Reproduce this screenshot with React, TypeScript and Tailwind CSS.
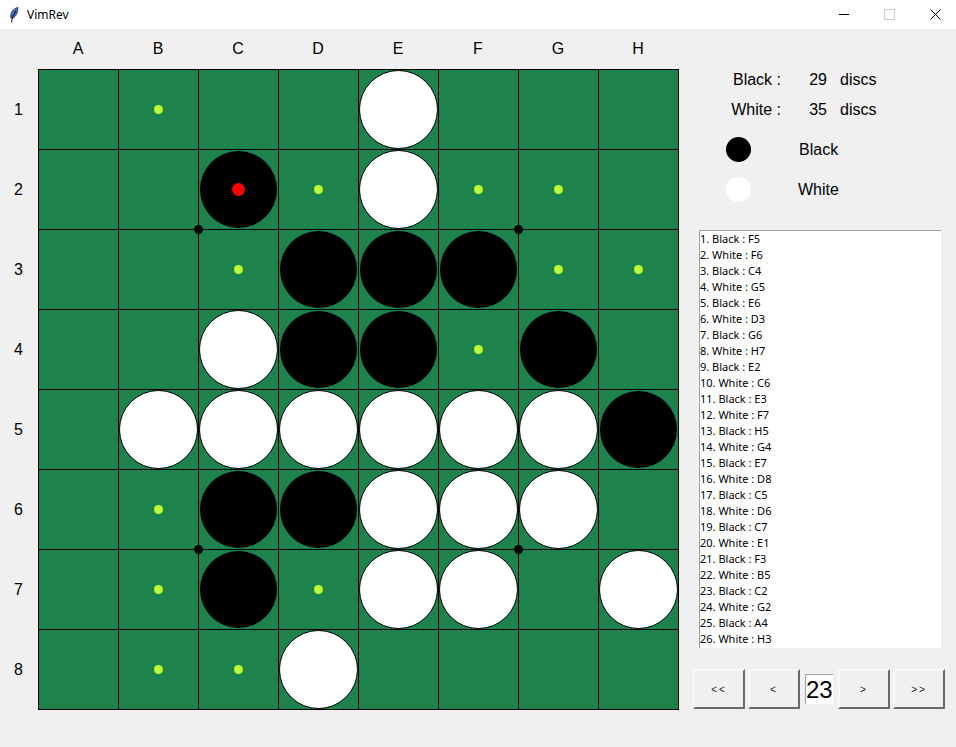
type Mark = "b" | "w" | "h" | "l" | ".";

const COLS = ["A", "B", "C", "D", "E", "F", "G", "H"];

// b = black disc, w = white disc, h = legal move hint, l = last move
const BOARD: string[] = [
  ".h..w...",
  "..lhwhh.",
  "..hbbbhh",
  "..wbbhb.",
  ".wwwwwwb",
  ".hbbwww.",
  ".hbhww.w",
  ".hhw....",
];

const MOVES = [
  "1. Black : F5", "2. White : F6", "3. Black : C4", "4. White : G5", "5. Black : E6",
  "6. White : D3", "7. Black : G6", "8. White : H7", "9. Black : E2", "10. White : C6",
  "11. Black : E3", "12. White : F7", "13. Black : H5", "14. White : G4", "15. Black : E7",
  "16. White : D8", "17. Black : C5", "18. White : D6", "19. Black : C7", "20. White : E1",
  "21. Black : F3", "22. White : B5", "23. Black : C2", "24. White : G2", "25. Black : A4",
  "26. White : H3",
];

function Cell({ mark }: { mark: Mark }) {
  return (
    <div className="w-[80px] h-[80px] flex items-center justify-center border-r border-b border-black">
      {mark === "b" && <div className="w-[77px] h-[77px] rounded-full bg-black" />}
      {mark === "w" && <div className="w-[79px] h-[79px] rounded-full bg-white border border-black" />}
      {mark === "h" && <div className="w-[9px] h-[9px] rounded-full bg-[#c0ff33]" />}
      {mark === "l" && (
        <div className="w-[77px] h-[77px] rounded-full bg-black flex items-center justify-center">
          <div className="w-[13px] h-[13px] rounded-full bg-[#ff0000]" />
        </div>
      )}
    </div>
  );
}

function NavButton({ label }: { label: string }) {
  return (
    <button className="w-[52px] h-[40px] flex items-center justify-center bg-[#f0f0f0] border-2 border-t-[#f8f8f8] border-l-[#f8f8f8] border-r-[#696969] border-b-[#696969] text-[10px] tracking-[2px] text-[#222]">
      {label}
    </button>
  );
}

export default function App() {
  return (
    <div className="w-[956px] h-[747px] flex flex-col bg-[#f0f0f0] overflow-hidden font-['Liberation_Sans',sans-serif] text-black">
      <div className="h-[29px] shrink-0 bg-white flex items-center">
        <svg className="ml-[10px] shrink-0" width="9" height="16" viewBox="0 0 9 16">
          <path d="M8 0.5 C4.5 1 1.2 4 0.8 8 L0.8 11 L3 11 C6 9.5 8 5 8 0.5 Z" fill="#3f74c4" stroke="#1f2f4a" strokeWidth="0.8" />
          <path d="M6 3.5 L2.2 11 L1.6 15.5" fill="none" stroke="#111" strokeWidth="1" />
        </svg>
        <span className="ml-[8px] text-[12px] font-['Noto_Sans',sans-serif]">VimRev</span>
        <div className="ml-auto flex items-center">
          <div className="w-[42px] h-[29px] flex items-center justify-center">
            <div className="w-[10px] h-px bg-black" />
          </div>
          <div className="w-[49px] h-[29px] flex items-center justify-center">
            <div className="w-[11px] h-[11px] border border-[#cccccc]" />
          </div>
          <div className="w-[42px] h-[29px] flex items-center justify-center">
            <svg width="11" height="11" viewBox="0 0 11 11">
              <path d="M0.5 0.5 L10.5 10.5 M10.5 0.5 L0.5 10.5" stroke="#000" strokeWidth="1" />
            </svg>
          </div>
        </div>
      </div>

      <div className="flex">
        <div className="grid grid-cols-[38px_641px] grid-rows-[40px_641px] shrink-0">
          <div />
          <div className="flex">
            {COLS.map((c) => (
              <div key={c} className="w-[80px] flex items-center justify-center text-[16px]">
                {c}
              </div>
            ))}
          </div>
          <div className="flex flex-col pt-px">
            {BOARD.map((_, i) => (
              <div key={i} className="h-[80px] pr-px flex items-center justify-center text-[16px]">
                {i + 1}
              </div>
            ))}
          </div>
          <div className="relative grid grid-cols-[repeat(8,80px)] grid-rows-[repeat(8,80px)] border-t border-l border-black bg-[#1e824c]">
            {BOARD.map((row, r) =>
              row.split("").map((m, c) => <Cell key={`${r}-${c}`} mark={m as Mark} />)
            )}
            <div className="absolute left-[155px] top-[155px] w-[9px] h-[9px] rounded-full bg-black" />
            <div className="absolute left-[475px] top-[155px] w-[9px] h-[9px] rounded-full bg-black" />
            <div className="absolute left-[155px] top-[475px] w-[9px] h-[9px] rounded-full bg-black" />
            <div className="absolute left-[475px] top-[475px] w-[9px] h-[9px] rounded-full bg-black" />
          </div>
        </div>

        <div className="flex-1 flex flex-col pt-[36px] text-[16px]">
          <div className="h-[30px] flex items-center">
            <span className="w-[102px] text-right">Black :</span>
            <span className="w-[46px] text-right">29</span>
            <span className="ml-[13px]">discs</span>
          </div>
          <div className="h-[30px] flex items-center">
            <span className="w-[102px] text-right">White :</span>
            <span className="w-[46px] text-right">35</span>
            <span className="ml-[13px]">discs</span>
          </div>
          <div className="h-[40px] mt-[4px] flex items-center">
            <div className="ml-[47px] w-[25px] h-[25px] rounded-full bg-black" />
            <span className="ml-[48px] pt-[2px]">Black</span>
          </div>
          <div className="h-[40px] flex items-center">
            <div className="ml-[47px] w-[25px] h-[25px] rounded-full bg-white" />
            <span className="ml-[47px] pt-[2px]">White</span>
          </div>

          <div className="mt-[21px] ml-[20px] w-[242px] h-[418px] bg-white border-t border-l border-[#a0a0a0] overflow-hidden font-['Noto_Sans',sans-serif] text-[11px]">
            {MOVES.map((m) => (
              <div key={m} className="h-[16px] leading-[16px] whitespace-nowrap">
                {m}
              </div>
            ))}
          </div>

          <div className="mt-[21px] ml-[14px] flex items-center">
            <NavButton label="<<" />
            <div className="ml-[3px]">
              <NavButton label="<" />
            </div>
            <div className="ml-[5px] w-[28px] h-[30px] bg-white border-t border-l border-[#a0a0a0] text-[24px] leading-[29px] whitespace-nowrap">
              23
            </div>
            <div className="ml-[5px]">
              <NavButton label=">" />
            </div>
            <div className="ml-[3px]">
              <NavButton label=">>" />
            </div>
          </div>
        </div>
      </div>
    </div>
  );
}
